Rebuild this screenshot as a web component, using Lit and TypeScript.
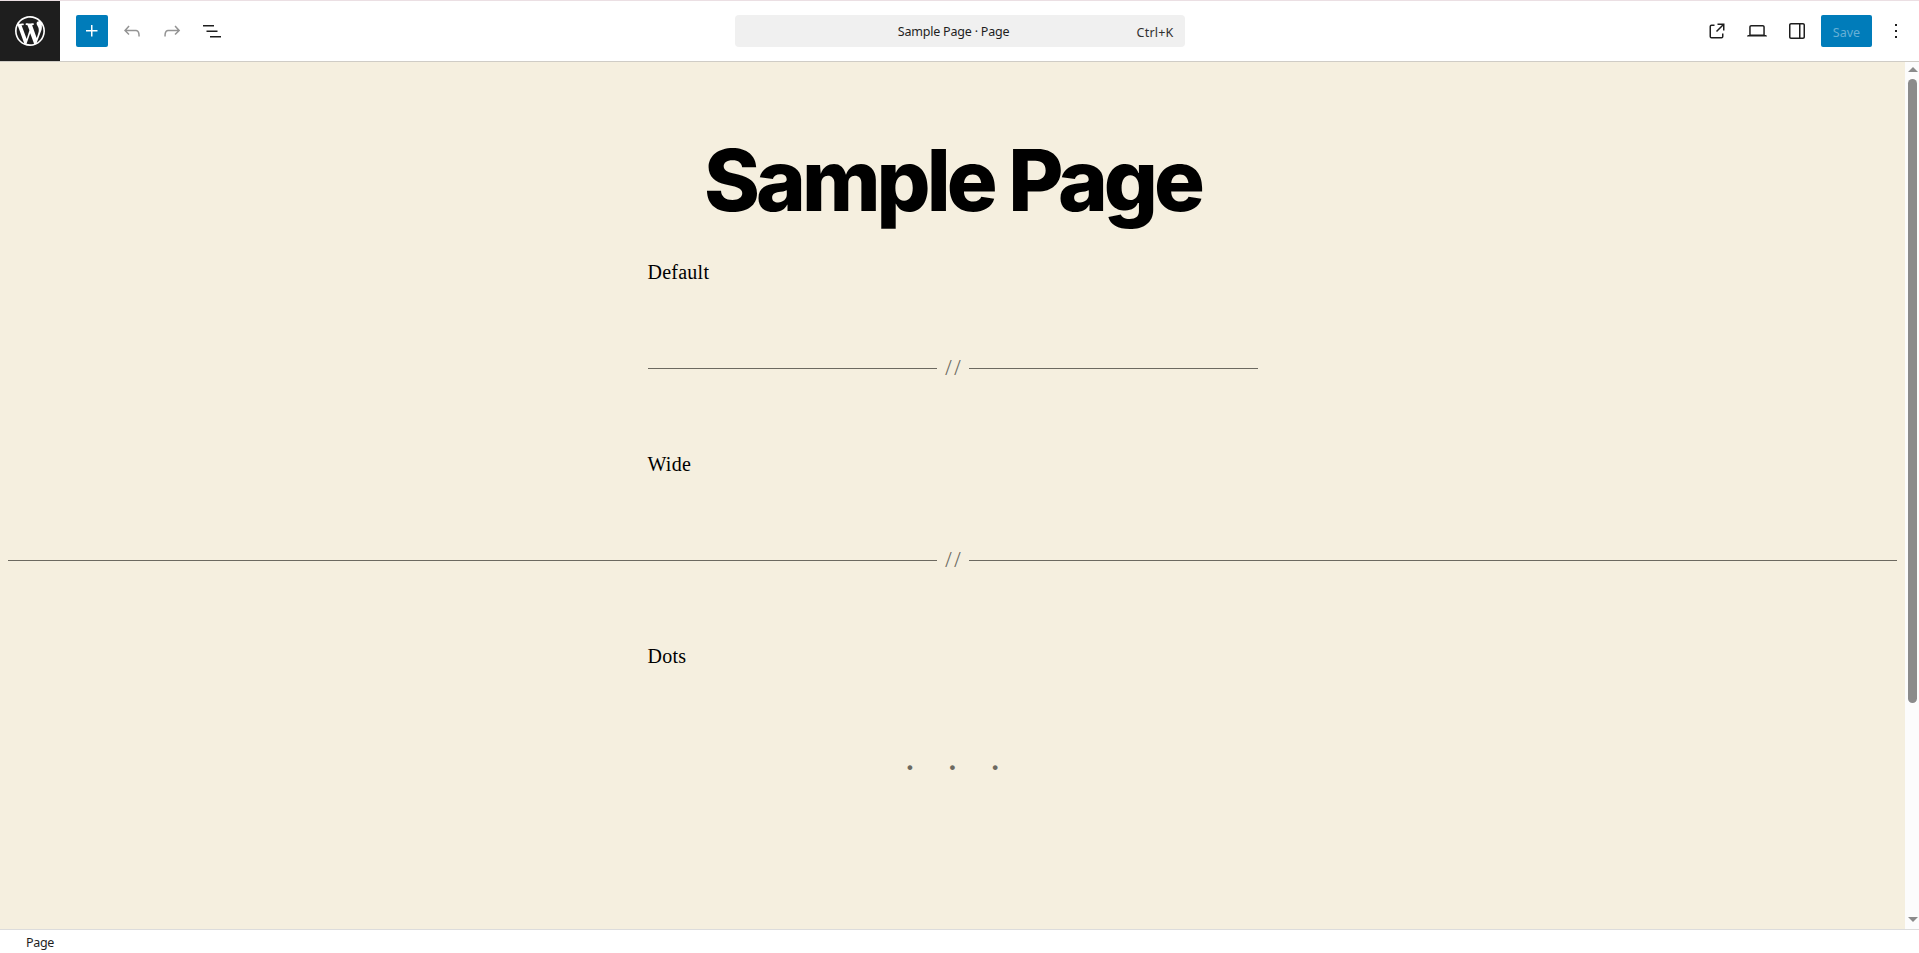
import { LitElement, html, css, svg } from "lit";
import { customElement } from "lit/decorators.js";

const ICONS = {
  plus: "M11 12.5V17.5H12.5V12.5H17.5V11H12.5V6H11V11H6V12.5H11Z",
  undo: "M18.3 11.7c-.6-.6-1.4-.9-2.3-.9H6.7l2.9-3.3-1.1-1-4.5 5L8.5 16l1-1-2.7-2.7H16c.5 0 .9.2 1.3.5 1 1 1 3.4 1 4.5v.3h1.5v-.2c0-1.5 0-4.3-1.5-5.7z",
  redo: "M15.6 6.5l-1.1 1 2.9 3.3H8c-.9 0-1.7.3-2.3.9-1.4 1.5-1.4 4.2-1.4 5.6v.2h1.5v-.3c0-1.1 0-3.5 1-4.5.3-.3.7-.5 1.3-.5h9.2L14.5 15l1.1 1.1 4.6-4.6-4.6-5z",
  list: "M3 6h11v1.5H3V6Zm3.5 5.5h11V13h-11v-1.5ZM21 17H10v1.5h11V17Z",
  external: "M19.5 4.5h-7V6h4.44l-5.97 5.97 1.06 1.06L18 7.06v4.44h1.5v-7Zm-13 1a2 2 0 0 0-2 2v10a2 2 0 0 0 2 2h10a2 2 0 0 0 2-2v-3H17v3a.5.5 0 0 1-.5.5h-10a.5.5 0 0 1-.5-.5v-10a.5.5 0 0 1 .5-.5h3V5.5h-3Z",
  desktop: "M20.5 16h-.7V8c0-1.1-.9-2-2-2H6.2c-1.1 0-2 .9-2 2v8h-.7c-.8 0-1.5.7-1.5 1.5h20c0-.8-.7-1.5-1.5-1.5zM5.7 8c0-.3.2-.5.5-.5h11.6c.3 0 .5.2.5.5v7.6H5.7V8z",
  drawer: "M18 4H6c-1.1 0-2 .9-2 2v12c0 1.1.9 2 2 2h12c1.1 0 2-.9 2-2V6c0-1.1-.9-2-2-2zm-4 14.5H6c-.3 0-.5-.2-.5-.5V6c0-.3.2-.5.5-.5h8v13zm4.5-.5c0 .3-.2.5-.5.5h-2.5v-13H18c.3 0 .5.2.5.5v12z",
  more: "M13 19h-2v-2h2v2zm0-6h-2v-2h2v2zm0-6h-2V5h2v2z",
  wordpress: "M20 10c0-5.51-4.49-10-10-10C4.48 0 0 4.49 0 10c0 5.52 4.48 10 10 10 5.51 0 10-4.48 10-10zM7.78 15.37L4.37 6.22c.55-.02 1.17-.08 1.17-.08.5-.06.44-1.13-.06-1.11 0 0-1.45.11-2.37.11-.18 0-.37 0-.58-.01C4.12 2.69 6.87 1.11 10 1.11c2.33 0 4.45.87 6.05 2.34-.68-.11-1.65.39-1.65 1.58 0 .74.45 1.36.9 2.1.35.61.55 1.36.55 2.46 0 1.49-1.4 5-1.4 5l-3.03-8.37c.54-.02.82-.17.82-.17.5-.05.44-1.25-.06-1.22 0 0-1.44.12-2.38.12-.87 0-2.33-.12-2.33-.12-.5-.03-.56 1.2-.06 1.22l.92.08 1.26 3.41zM17.41 10c.24-.64.74-1.87.43-4.25.7 1.29 1.05 2.71 1.05 4.25 0 3.29-1.73 6.24-4.4 7.78.97-2.59 1.94-5.2 2.92-7.78zM6.1 18.09C3.12 16.65 1.11 13.53 1.11 10c0-1.3.23-2.48.72-3.59C3.25 10.3 4.67 14.2 6.1 18.09zm4.03-6.63l2.58 6.98c-.86.29-1.76.45-2.71.45-.79 0-1.57-.11-2.29-.33.81-2.38 1.62-4.74 2.42-7.1z",
};

const icon = (name: keyof typeof ICONS) =>
  html`<svg class="icon" viewBox="0 0 24 24">${svg`<path d=${ICONS[name]} />`}</svg>`;

@customElement("app-root")
export class AppRoot extends LitElement {
  static styles = css`
    :host {
      display: flex;
      flex-direction: column;
      height: 100vh;
      box-sizing: border-box;
      overflow: hidden;
      border-top: 1px solid #ebdfe3;
      background: #fff;
      color: #1e1e1e;
      font: 13px/16px "Noto Sans", sans-serif;
    }
    * { box-sizing: border-box; }
    button {
      border: 0; padding: 0; margin: 0; background: none;
      font: inherit; color: inherit;
      display: flex; align-items: center; justify-content: center;
    }
    .icon { width: 24px; height: 24px; fill: currentColor; display: block; }
    .header {
      flex: none;
      height: 61px;
      display: grid;
      grid-template-columns: 1fr 450px 1fr;
      border-bottom: 1px solid #cfccc6;
      align-items: center;
    }
    .left { display: flex; align-items: center; height: 60px; }
    .logo {
      width: 60px; height: 60px; background: #1e1e1e; color: #fff;
      display: flex; align-items: center; justify-content: center;
      margin-right: 16px;
    }
    .logo svg { width: 30px; height: 30px; fill: currentColor; }
    .tools { display: flex; gap: 8px; }
    .tool { width: 32px; height: 32px; }
    .primary { background: #007cba; color: #fff; border-radius: 2px; }
    .off { color: #949494; }
    .command {
      width: 450px; height: 32px; background: #f0f0f0; border-radius: 4px;
      display: flex; align-items: center;
      padding: 0 11px 0 0;
    }
    .doc { flex: 1; text-align: center; padding: 2px 0 0 36px; font-size: 12.5px; letter-spacing: -0.2px; white-space: nowrap; }
    .keys { font-size: 12.5px; letter-spacing: 0.2px; color: #2f2f2f; padding-top: 3px; }
    .right { display: flex; justify-content: flex-end; align-items: center; gap: 8px; padding-right: 7px; }
    .save { width: 51px; height: 32px; color: #66b0d6; font-size: 12.5px; padding-top: 3px; }
    .body { flex: 1; min-height: 0; display: flex; background: #f5efdf; }
    .canvas { flex: 1; min-width: 0; padding: 0 8px; color: #000; font: 20px/32px "Liberation Serif", serif; }
    .title {
      margin: 68px 0 0; height: 100px; text-align: center;
      font: 800 84.8px/100px Inter, sans-serif; letter-spacing: -4px;
      white-space: nowrap;
    }
    .text { width: 610px; margin: 0 auto; height: 32px; letter-spacing: 0.25px; }
    .first { margin-top: 26px; }
    .rule {
      display: flex; align-items: center; height: 32px; margin: 64px auto;
      color: #6c6960; gap: 8px;
    }
    .rule::before, .rule::after { content: ""; flex: 1; height: 1px; background: #6c6960; }
    .narrow { width: 610px; }
    .slashes { width: 16px; font-size: 23px; line-height: 34px; letter-spacing: 2.6px; padding-left: 0.7px; white-space: nowrap; }
    .dots {
      margin: 72px 0 0; height: 48px; text-align: center; color: #6c6960;
      font-size: 40px; line-height: 48px; letter-spacing: 29.3px; padding-left: 29.3px;
    }
    .scroll {
      width: 14px; background: #fcfcfc; color: #8b8b8b;
      display: flex; flex-direction: column; align-items: center; padding: 5px 1px 7px 2px;
    }
    .up, .down { border-left: 5px solid transparent; border-right: 5px solid transparent; }
    .up { border-bottom: 5px solid; }
    .down { border-top: 5px solid; margin-top: auto; }
    .thumb { width: 9px; height: 624px; margin-top: 7px; border-radius: 5px; background: #8b8b8b; }
    .footer {
      flex: none; height: 24px; border-top: 1px solid #dcdcdc; padding: 5px 0 0 26px;
      font-size: 12.5px; letter-spacing: -0.3px;
    }
  `;

  render() {
    return html`
      <header class="header">
        <div class="left">
          <div class="logo"><svg viewBox="0 0 20 20">${svg`<path d=${ICONS.wordpress} />`}</svg></div>
          <div class="tools">
            <button class="tool primary">${icon("plus")}</button>
            <button class="tool off">${icon("undo")}</button>
            <button class="tool off">${icon("redo")}</button>
            <button class="tool">${icon("list")}</button>
          </div>
        </div>
        <div class="command">
          <span class="doc">Sample Page · Page</span>
          <span class="keys">Ctrl+K</span>
        </div>
        <div class="right">
          <button class="tool">${icon("external")}</button>
          <button class="tool">${icon("desktop")}</button>
          <button class="tool">${icon("drawer")}</button>
          <button class="save primary">Save</button>
          <button class="tool">${icon("more")}</button>
        </div>
      </header>
      <div class="body">
        <main class="canvas">
          <h1 class="title">Sample Page</h1>
          <div class="text first">Default</div>
          <div class="rule narrow"><span class="slashes">//</span></div>
          <div class="text">Wide</div>
          <div class="rule"><span class="slashes">//</span></div>
          <div class="text">Dots</div>
          <div class="dots">···</div>
        </main>
        <div class="scroll">
          <div class="up"></div>
          <div class="thumb"></div>
          <div class="down"></div>
        </div>
      </div>
      <footer class="footer">Page</footer>
    `;
  }
}
